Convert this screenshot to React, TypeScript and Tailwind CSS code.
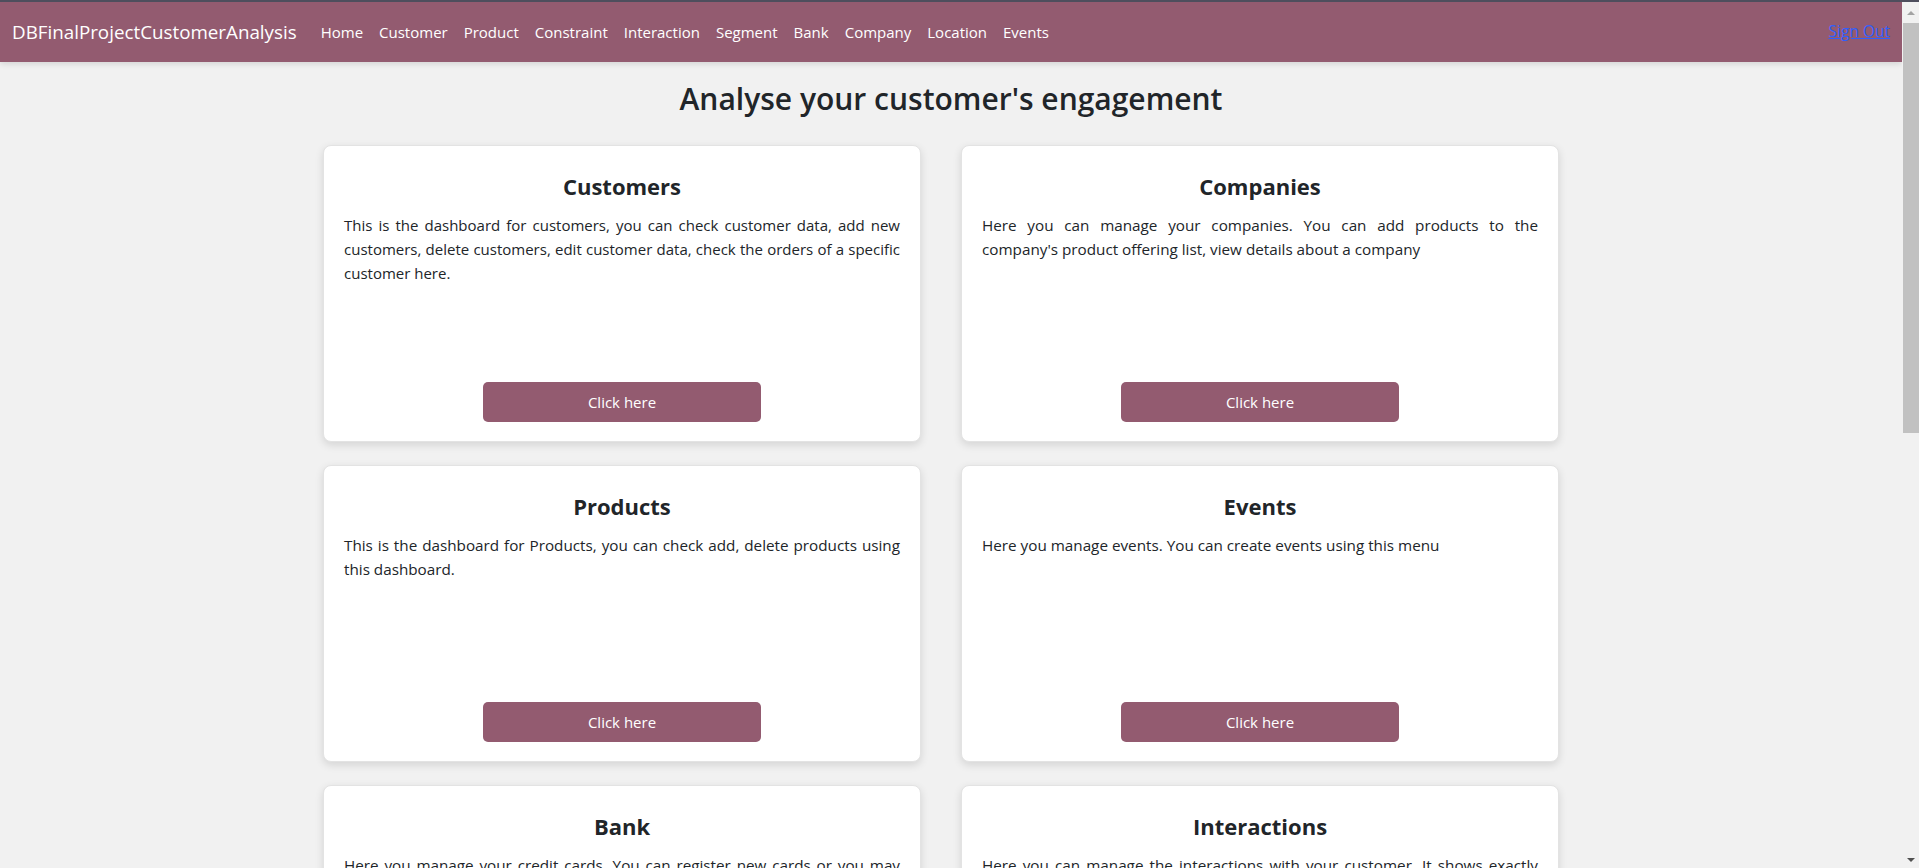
import React from "react";

const cards = [
  {
    title: "Customers",
    size: "text-[15px]",
    text: "This is the dashboard for customers, you can check customer data, add new customers, delete customers, edit customer data, check the orders of a specific customer here.",
  },
  {
    title: "Companies",
    size: "text-[15.25px]",
    text: "Here you can manage your companies. You can add products to the company's product offering list, view details about a company",
  },
  {
    title: "Products",
    size: "text-[15.25px]",
    text: "This is the dashboard for Products, you can check add, delete products using this dashboard.",
  },
  {
    title: "Events",
    size: "text-[15.25px]",
    text: "Here you manage events. You can create events using this menu",
  },
  {
    title: "Bank",
    size: "text-[15.25px]",
    text: "Here you manage your credit cards. You can register new cards or you may delete the cards that are no longer in use.",
  },
  {
    title: "Interactions",
    size: "text-[15.25px]",
    text: "Here you can manage the interactions with your customer. It shows exactly which customer interacted with which product and when.",
  },
];

const links = [
  "Home",
  "Customer",
  "Product",
  "Constraint",
  "Interaction",
  "Segment",
  "Bank",
  "Company",
  "Location",
  "Events",
];

function Card({ title, text, size }: { title: string; text: string; size: string }) {
  return (
    <div className="h-[297px] bg-white rounded-lg border border-[#e3e3e3] shadow-[0_3px_8px_rgba(0,0,0,0.12)] flex flex-col px-5 pt-6 pb-[19px]">
      <h3 className="text-center text-[22px] leading-8 font-bold text-[#212529] mb-[11px]">
        {title}
      </h3>
      <p className={`${size} leading-6 text-[#212529] text-justify`}>{text}</p>
      <div className="mt-auto flex justify-center">
        <button className="w-1/2 h-10 rounded-[5px] bg-[#935b70] text-white text-[15px]">
          Click here
        </button>
      </div>
    </div>
  );
}

export default function App() {
  return (
    <div
      className="h-screen overflow-hidden flex flex-col bg-[#f1f1f1]"
      style={{ fontFamily: '"Open Sans", "Noto Sans", sans-serif' }}
    >
      <div className="h-[2px] bg-[#4e4e5d] shrink-0" />
      <div className="flex flex-1 min-h-0">
        <div className="flex-1 min-w-0 overflow-hidden">
          <nav className="relative z-10 h-[60px] bg-[#935b70] flex items-center pl-3 pr-3 shadow-[0_2px_6px_rgba(0,0,0,0.12)]">
            <span className="text-white text-[18.8px] mr-4">DBFinalProjectCustomerAnalysis</span>
            <ul className="flex items-center">
              {links.map((l) => (
                <li key={l} className="px-2 text-white text-[15px]">
                  {l}
                </li>
              ))}
            </ul>
            <a href="#" className="ml-auto text-[#2f5fff] underline text-[15.5px]">
              Sign Out
            </a>
          </nav>
          <main>
            <h1 className="text-center text-[30px] leading-9 font-semibold text-[#212529] mt-[19px] mb-[28px]">
              Analyse your customer's engagement
            </h1>
            <div className="mx-auto w-[1256px] pr-5 grid grid-cols-2 gap-x-10 gap-y-[23px]">
              {cards.map((c) => (
                <Card key={c.title} title={c.title} text={c.text} size={c.size} />
              ))}
            </div>
          </main>
        </div>
        <div className="w-[17px] shrink-0 bg-[#f1f1f1] flex flex-col">
          <div className="h-[21px] flex items-center justify-center">
            <div className="w-0 h-0 border-l-[4px] border-r-[4px] border-b-[4px] border-l-transparent border-r-transparent border-b-[#a3a3a3]" />
          </div>
          <div className="h-[410px] bg-[#c1c1c1] ml-px" />
          <div className="flex-1" />
          <div className="h-[17px] flex items-center justify-center">
            <div className="w-0 h-0 border-l-[4px] border-r-[4px] border-t-[4px] border-l-transparent border-r-transparent border-t-[#505050]" />
          </div>
        </div>
      </div>
    </div>
  );
}
